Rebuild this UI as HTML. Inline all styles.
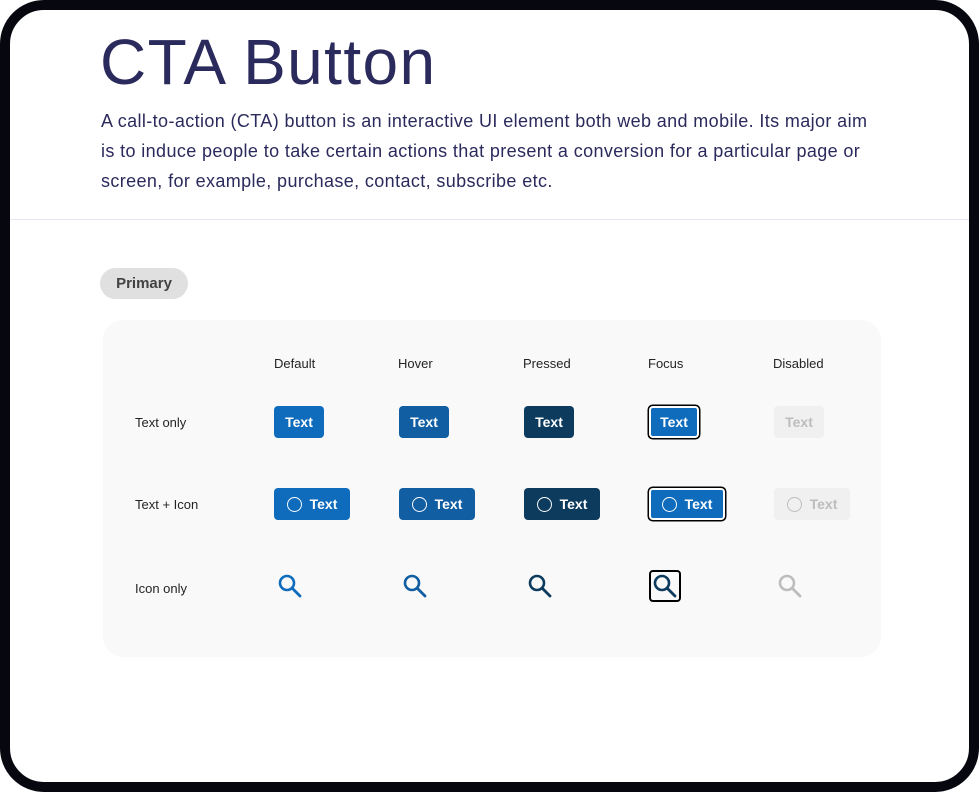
<!DOCTYPE html>
<html><head><meta charset="utf-8"><style>
*{margin:0;padding:0;box-sizing:border-box}
html,body{width:979px;height:792px;background:#fff;overflow:hidden;font-family:"Liberation Sans",sans-serif}
.frame{position:absolute;left:0;top:0;width:979px;height:792px;border:10px solid #07070f;border-radius:44px;background:#fff}
.abs{position:absolute}
h1{position:absolute;left:100px;top:25px;font-size:64px;font-weight:400;color:#2b2a5c;white-space:nowrap;letter-spacing:1.4px}
.desc{position:absolute;left:101px;top:106px;font-size:18px;line-height:30px;color:#2b2a5c;letter-spacing:0.38px}
.desc div{white-space:nowrap}
.hr{position:absolute;left:10px;right:10px;top:219px;height:1px;background:#e6e6ee}
.pill{position:absolute;left:100px;top:268px;width:88px;height:31px;border-radius:16px;background:#e0e0e0;color:#424242;font-weight:700;font-size:15px;line-height:31px;text-align:center}
.panel{position:absolute;left:103px;top:320px;width:778px;height:337px;border-radius:20px;background:#f9f9f9}
.lbl{position:absolute;font-size:13px;color:#242424}
.btn{position:absolute;height:32px;border-radius:4px;color:#fff;font-size:14px;font-weight:700;line-height:32px;text-align:center}
.ic{display:inline-block;width:15px;height:15px;border:1.3px solid currentColor;border-radius:50%;vertical-align:-3px;margin-right:8px}
.f{box-shadow:0 0 0 2px #fff,0 0 0 3.5px #000}
.d{background:#0f6cbd}.h{background:#115ea3}.p{background:#0c3b5e}.x{background:#f0f0f0;color:#bdbdbd}
svg.s{position:absolute}
</style></head><body>
<div class="frame"></div>
<h1>CTA Button</h1>
<div class="desc"><div>A call-to-action (CTA) button is an interactive UI element both web and mobile. Its major aim</div><div>is to induce people to take certain actions that present a conversion for a particular page or</div><div>screen, for example, purchase, contact, subscribe etc.</div></div>
<div class="hr"></div>
<div class="pill">Primary</div>
<div class="panel"></div>
<div class="lbl" style="left:274px;top:356px">Default</div>
<div class="lbl" style="left:398px;top:356px">Hover</div>
<div class="lbl" style="left:523px;top:356px">Pressed</div>
<div class="lbl" style="left:648px;top:356px">Focus</div>
<div class="lbl" style="left:773px;top:356px">Disabled</div>
<div class="lbl" style="left:135px;top:415px">Text only</div>
<div class="lbl" style="left:135px;top:497px">Text + Icon</div>
<div class="lbl" style="left:135px;top:581px">Icon only</div>

<div class="btn d" style="left:274px;top:406px;width:50px">Text</div>
<div class="btn h" style="left:399px;top:406px;width:50px">Text</div>
<div class="btn p" style="left:524px;top:406px;width:50px">Text</div>
<div class="btn d f" style="left:651px;top:408px;width:46px;height:28px;line-height:28px;border-radius:2px">Text</div>
<div class="btn x" style="left:774px;top:406px;width:50px">Text</div>

<div class="btn d" style="left:274px;top:488px;width:76px"><span class="ic"></span>Text</div>
<div class="btn h" style="left:399px;top:488px;width:76px"><span class="ic"></span>Text</div>
<div class="btn p" style="left:524px;top:488px;width:76px"><span class="ic"></span>Text</div>
<div class="btn d f" style="left:651px;top:490px;width:72px;height:28px;line-height:28px;border-radius:2px"><span class="ic"></span>Text</div>
<div class="btn x" style="left:774px;top:488px;width:76px"><span class="ic"></span>Text</div>

<svg class="s" style="left:276px;top:572px" width="28" height="28"><circle cx="11" cy="11" r="7" fill="none" stroke="#0f6cbd" stroke-width="2.6"/><path d="M16 16L24 24" stroke="#0f6cbd" stroke-width="2.8" stroke-linecap="round"/></svg>
<svg class="s" style="left:401px;top:572px" width="28" height="28"><circle cx="11" cy="11" r="7" fill="none" stroke="#115ea3" stroke-width="2.6"/><path d="M16 16L24 24" stroke="#115ea3" stroke-width="2.8" stroke-linecap="round"/></svg>
<svg class="s" style="left:526px;top:572px" width="28" height="28"><circle cx="11" cy="11" r="7" fill="none" stroke="#0c3b5e" stroke-width="2.6"/><path d="M16 16L24 24" stroke="#0c3b5e" stroke-width="2.8" stroke-linecap="round"/></svg>
<div class="abs" style="left:649px;top:570px;width:32px;height:32px;border:2px solid #000;border-radius:4px"></div>
<svg class="s" style="left:651px;top:572px" width="28" height="28"><circle cx="11" cy="11" r="7" fill="none" stroke="#0c3b5e" stroke-width="2.6"/><path d="M16 16L24 24" stroke="#0c3b5e" stroke-width="2.8" stroke-linecap="round"/></svg>
<svg class="s" style="left:776px;top:572px" width="28" height="28"><circle cx="11" cy="11" r="7" fill="none" stroke="#bdbdbd" stroke-width="2.6"/><path d="M16 16L24 24" stroke="#bdbdbd" stroke-width="2.8" stroke-linecap="round"/></svg>
</body></html>
